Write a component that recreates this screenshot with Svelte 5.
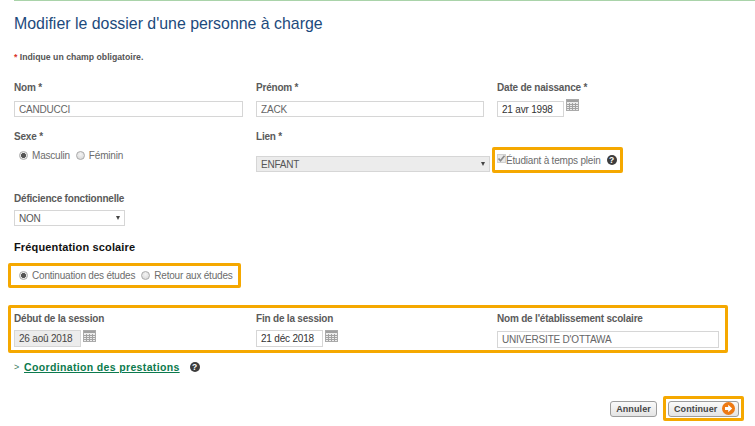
<script>
  const help = "?";
</script>

{#snippet cal()}
  <svg class="cal" width="13" height="12" viewBox="0 0 13 12" aria-hidden="true">
    <rect x="0.5" y="0.5" width="12" height="11" fill="#ececec" stroke="#aaa" />
    <rect x="1" y="1" width="11" height="2" fill="#a0a0a0" />
    <path d="M1 5.5h11M1 7.5h11M1 9.5h11M3.5 4v7M6.5 4v7M9.5 4v7" stroke="#a2a2a2" stroke-width="1" fill="none" />
  </svg>
{/snippet}

{#snippet helpIcon()}
  <span class="help">{help}</span>
{/snippet}

<main class="page">
  <div class="rule"></div>
  <h1>Modifier le dossier d'une personne à charge</h1>
  <p class="note"><span class="star">*</span> Indique un champ obligatoire.</p>

  <div class="row r1">
    <div class="col">
      <label for="nom">Nom *</label>
      <input id="nom" class="txt w229" value="CANDUCCI" />
    </div>
    <div class="col">
      <label for="prenom">Prénom *</label>
      <input id="prenom" class="txt w228" value="ZACK" />
    </div>
    <div class="col">
      <label for="dn">Date de naissance *</label>
      <div class="dateline">
        <input id="dn" class="txt date dark" value="21 avr 1998" />
        {@render cal()}
      </div>
    </div>
  </div>

  <div class="row r2">
    <div class="col">
      <span class="lab">Sexe *</span>
      <div class="radios sexe">
        <span class="radio on"></span><span class="rt">Masculin</span>
        <span class="radio"></span><span class="rt">Féminin</span>
      </div>
    </div>
    <div class="col">
      <span class="lab">Lien *</span>
      <div class="sel lien"><span>ENFANT</span><i class="tri"></i></div>
    </div>
    <div class="col">
      <div class="hl student">
        <span class="check">
          <svg width="11" height="11" viewBox="0 0 11 11" aria-hidden="true"><path d="M2.5 5.5l2 2.2 4-5" stroke="#8a8a8a" stroke-width="1.7" fill="none" /></svg>
        </span>
        <span class="rt st">Étudiant à temps plein</span>
        {@render helpIcon()}
      </div>
    </div>
  </div>

  <div class="def">
    <span class="lab">Déficience fonctionnelle</span>
    <div class="sel nonsel"><span>NON</span><i class="tri"></i></div>
  </div>

  <h2>Fréquentation scolaire</h2>

  <div class="hl freq">
    <span class="radio on"></span><span class="rt">Continuation des études</span>
    <span class="radio"></span><span class="rt">Retour aux études</span>
  </div>

  <div class="hl session">
    <div class="col">
      <span class="lab">Début de la session</span>
      <div class="dateline">
        <input class="txt date off" value="26 aoû 2018" disabled />
        {@render cal()}
      </div>
    </div>
    <div class="col">
      <span class="lab">Fin de la session</span>
      <div class="dateline">
        <input class="txt date dark" value="21 déc 2018" />
        {@render cal()}
      </div>
    </div>
    <div class="col">
      <span class="lab">Nom de l'établissement scolaire</span>
      <input class="txt school" value="UNIVERSITE D'OTTAWA" />
    </div>
  </div>

  <div class="coord">
    <span class="gt">&gt;</span>
    <a href="#coord">Coordination des prestations</a>
    {@render helpIcon()}
  </div>

  <div class="actions">
    <button class="btn cancel">Annuler</button>
    <div class="hl cont">
      <button class="btn go">Continuer
        <svg width="13" height="13" viewBox="0 0 13 13" aria-hidden="true">
          <circle cx="6.5" cy="6.5" r="6.5" fill="#ee7a14" />
          <path d="M3 5h3.2V2.8L10.2 6.5 6.2 10.2V8H3z" fill="#fff" />
        </svg>
      </button>
    </div>
  </div>
</main>

<style>
  :global(body) {
    margin: 0;
    background: #fff;
  }
  .page {
    width: 755px;
    height: 426px;
    overflow: hidden;
    box-sizing: border-box;
    padding-left: 14px;
    font-family: "Liberation Sans", Arial, sans-serif;
    font-size: 10px;
    letter-spacing: -0.2px;
    color: #666;
  }
  .rule {
    height: 1px;
    background: #a9d3a9;
  }
  h1 {
    margin: 14px 0 0;
    font-size: 15.9px;
    letter-spacing: 0;
    line-height: 18px;
    font-weight: 400;
    color: #1c4a7c;
  }
  .note {
    margin: 18px 0 0;
    height: 12px;
    line-height: 12px;
    font-size: 8.7px;
    letter-spacing: 0;
    font-weight: 700;
    color: #555;
  }
  .star {
    color: #d9352a;
  }
  .row {
    display: grid;
    grid-template-columns: 242px 241px 1fr;
  }
  .r1 {
    margin-top: 18px;
  }
  .col {
    display: flex;
    flex-direction: column;
    align-items: flex-start;
    min-width: 0;
  }
  label,
  .lab {
    display: block;
    height: 13px;
    line-height: 13px;
    font-size: 10px;
    font-weight: 700;
    color: #5a5a5a;
  }
  .txt {
    box-sizing: border-box;
    height: 16px;
    margin: 7px 0 0;
    padding: 0 4px;
    border: 1px solid #d6d6d6;
    border-radius: 0;
    background: #fff;
    font: 10px "Liberation Sans", Arial, sans-serif;
    letter-spacing: -0.2px;
    color: #666;
    outline: none;
  }
  .w229 {
    width: 229px;
  }
  .w228 {
    width: 228px;
  }
  .dateline {
    display: flex;
    align-items: flex-start;
    gap: 2px;
  }
  .date {
    width: 67px;
  }
  .dark {
    color: #333;
  }
  .off {
    background: #ececec;
    color: #444;
    opacity: 1;
  }
  .cal {
    display: block;
    margin-top: 5px;
  }
  .r2 {
    margin-top: 13px;
    height: 44px;
  }
  .radios {
    display: flex;
    align-items: center;
  }
  .sexe {
    margin: 6px 0 0 5px;
    height: 13px;
  }
  .radio {
    box-sizing: border-box;
    width: 9px;
    height: 9px;
    border-radius: 50%;
    border: 1px solid #aaa;
    background: radial-gradient(circle at 50% 35%, #f4f4f4, #d4d4d4);
    flex: none;
    margin-right: 4px;
  }
  .radio.on {
    background: radial-gradient(circle, #555 0 2.2px, #e8e8e8 2.8px);
  }
  .rt {
    margin-right: 6px;
    color: #6c6c6c;
    white-space: nowrap;
  }
  .sel {
    box-sizing: border-box;
    height: 16px;
    border: 1px solid #d6d6d6;
    display: flex;
    align-items: center;
    justify-content: space-between;
    padding: 0 4px;
    font-size: 10px;
    color: #555;
  }
  .lien {
    width: 234px;
    margin-top: 13px;
    background: #ececec;
  }
  .nonsel {
    width: 111px;
    margin-top: 5px;
    background: #fff;
  }
  .tri {
    width: 0;
    height: 0;
    border-left: 2.5px solid transparent;
    border-right: 2.5px solid transparent;
    border-top: 4px solid #444;
  }
  .hl {
    box-sizing: border-box;
    border: 3px solid #f5a800;
    border-radius: 2px;
  }
  .student {
    display: flex;
    align-items: center;
    width: 131px;
    height: 26px;
    margin: 17px 0 0 -5px;
    padding-left: 2px;
    position: relative;
  }
  .check {
    box-sizing: border-box;
    width: 9px;
    height: 9px;
    margin-top: -3px;
    background: #e8e8e8;
    border: 1px solid #d0d0d0;
    display: block;
    flex: none;
    position: relative;
  }
  .check svg {
    display: block;
    margin: -2px 0 0 -2px;
  }
  .st {
    margin: 0 6px 0 0;
  }
  .help {
    display: inline-block;
    width: 10px;
    height: 10px;
    line-height: 10px;
    border-radius: 50%;
    background: #3d3d3d;
    color: #fff;
    font-size: 8.5px;
    letter-spacing: 0;
    font-weight: 700;
    text-align: center;
    flex: none;
  }
  .def {
    margin-top: 18px;
  }
  h2 {
    margin: 14px 0 0;
    height: 14px;
    line-height: 14px;
    font-size: 11px;
    font-weight: 700;
    color: #111;
    letter-spacing: 0.15px;
  }
  .freq {
    display: flex;
    align-items: center;
    width: 233px;
    height: 25px;
    margin: 9px 0 0 -6px;
    padding-left: 8px;
  }
  .session {
    display: grid;
    grid-template-columns: 242px 241px 1fr;
    width: 720px;
    height: 48px;
    margin: 17px 0 0 -6px;
    padding: 4px 0 0 3px;
  }
  .off,
  .session .dark {
    height: 17px;
    margin-top: 5px;
  }
  .session .cal {
    margin-top: 5px;
  }
  .school {
    width: 222px;
    height: 17px;
    margin-top: 6px;
  }
  .coord {
    display: flex;
    align-items: center;
    height: 14px;
    margin-top: 7px;
  }
  .gt {
    width: 10px;
    font-size: 9px;
    color: #3b7d5c;
  }
  .coord a {
    font-size: 10.5px;
    font-weight: 700;
    letter-spacing: 0.35px;
    color: #0c7a4d;
    text-decoration: underline;
    margin-right: 10px;
  }
  .actions {
    display: flex;
    justify-content: flex-end;
    align-items: center;
    margin-top: 22px;
    padding-right: 11px;
    gap: 6px;
  }
  .btn {
    box-sizing: border-box;
    height: 16px;
    padding: 0 5px;
    border: 1px solid #9d9d9d;
    border-radius: 3px;
    background: linear-gradient(#fafafa, #e4e4e4);
    font: 700 9px "Liberation Sans", Arial, sans-serif;
    letter-spacing: 0.1px;
    color: #444;
    display: flex;
    align-items: center;
    gap: 5px;
  }
  .btn svg {
    flex: none;
  }
  .cancel {
    width: 47px;
    justify-content: center;
  }
  .cont {
    width: 81px;
    height: 25px;
    padding: 2px;
    display: flex;
    align-items: center;
    justify-content: center;
  }
  .go {
    width: 71px;
  }
</style>
